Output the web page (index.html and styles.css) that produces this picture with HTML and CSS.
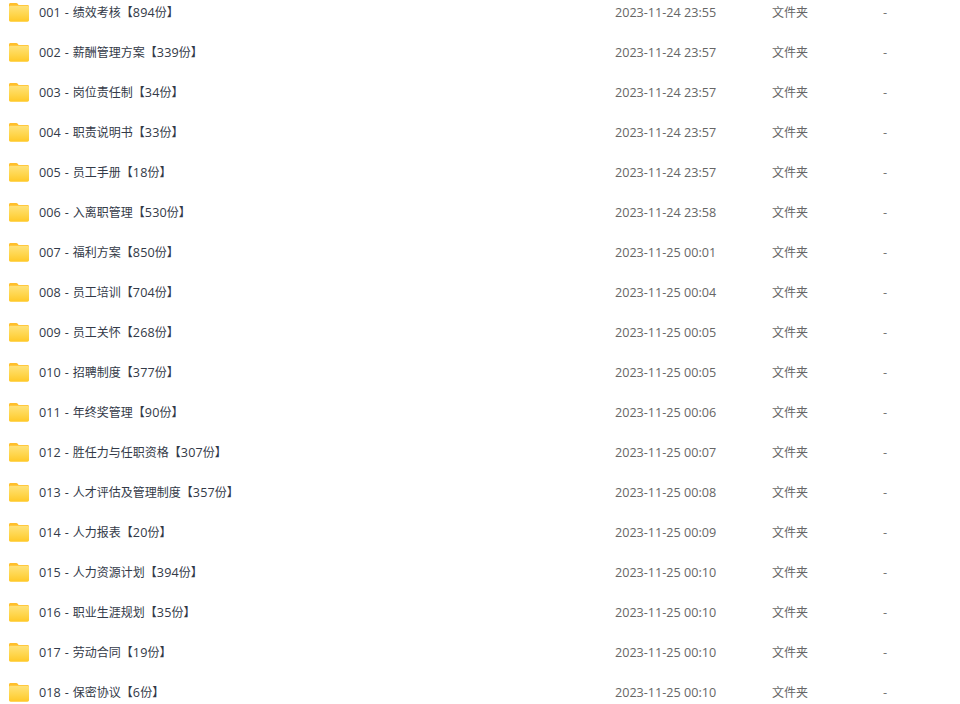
FILE: index.html
```html
<!DOCTYPE html>
<html lang="zh-CN">
<head>
<meta charset="utf-8">
<title>文件列表</title>
<link rel="stylesheet" href="styles.css">
</head>
<body>
<svg class="sprite" width="0" height="0" aria-hidden="true">
  <defs>
    <linearGradient id="fg" x1="0" y1="0" x2="0" y2="1"><stop offset="0" stop-color="#ffe27a"/><stop offset="0.5" stop-color="#ffd750"/><stop offset="1" stop-color="#ffc826"/></linearGradient>
    <symbol id="folder" viewBox="0 0 20 19">
      <path d="M0 1.500C0 .6.600 0 1.500 0h5.700c.7 0 1.100.3 1.500.8l.9 1.100h8.800c1 0 1.600.7 1.600 1.600V8H0Z" fill="#ffbf2b"/>
      <path d="M0 4.200c0-1 .7-1.500 1.600-1.500h16.800c.9 0 1.600.5 1.600 1.500v12.900c0 1-.7 1.700-1.600 1.700H1.600C.7 18.800 0 18.100 0 17.100Z" fill="url(#fg)"/>
    </symbol>
  </defs>
</svg>
<main class="list">
  <div class="row"><svg class="icon"><use href="#folder"/></svg><span class="name"><span class="num">001 - </span>绩效考核【<span class="num">894</span>份】</span><span class="date">2023-11-24 23:55</span><span class="type">文件夹</span><span class="size">-</span></div>
  <div class="row"><svg class="icon"><use href="#folder"/></svg><span class="name"><span class="num">002 - </span>薪酬管理方案【<span class="num">339</span>份】</span><span class="date">2023-11-24 23:57</span><span class="type">文件夹</span><span class="size">-</span></div>
  <div class="row"><svg class="icon"><use href="#folder"/></svg><span class="name"><span class="num">003 - </span>岗位责任制【<span class="num">34</span>份】</span><span class="date">2023-11-24 23:57</span><span class="type">文件夹</span><span class="size">-</span></div>
  <div class="row"><svg class="icon"><use href="#folder"/></svg><span class="name"><span class="num">004 - </span>职责说明书【<span class="num">33</span>份】</span><span class="date">2023-11-24 23:57</span><span class="type">文件夹</span><span class="size">-</span></div>
  <div class="row"><svg class="icon"><use href="#folder"/></svg><span class="name"><span class="num">005 - </span>员工手册【<span class="num">18</span>份】</span><span class="date">2023-11-24 23:57</span><span class="type">文件夹</span><span class="size">-</span></div>
  <div class="row"><svg class="icon"><use href="#folder"/></svg><span class="name"><span class="num">006 - </span>入离职管理【<span class="num">530</span>份】</span><span class="date">2023-11-24 23:58</span><span class="type">文件夹</span><span class="size">-</span></div>
  <div class="row"><svg class="icon"><use href="#folder"/></svg><span class="name"><span class="num">007 - </span>福利方案【<span class="num">850</span>份】</span><span class="date">2023-11-25 00:01</span><span class="type">文件夹</span><span class="size">-</span></div>
  <div class="row"><svg class="icon"><use href="#folder"/></svg><span class="name"><span class="num">008 - </span>员工培训【<span class="num">704</span>份】</span><span class="date">2023-11-25 00:04</span><span class="type">文件夹</span><span class="size">-</span></div>
  <div class="row"><svg class="icon"><use href="#folder"/></svg><span class="name"><span class="num">009 - </span>员工关怀【<span class="num">268</span>份】</span><span class="date">2023-11-25 00:05</span><span class="type">文件夹</span><span class="size">-</span></div>
  <div class="row"><svg class="icon"><use href="#folder"/></svg><span class="name"><span class="num">010 - </span>招聘制度【<span class="num">377</span>份】</span><span class="date">2023-11-25 00:05</span><span class="type">文件夹</span><span class="size">-</span></div>
  <div class="row"><svg class="icon"><use href="#folder"/></svg><span class="name"><span class="num">011 - </span>年终奖管理【<span class="num">90</span>份】</span><span class="date">2023-11-25 00:06</span><span class="type">文件夹</span><span class="size">-</span></div>
  <div class="row"><svg class="icon"><use href="#folder"/></svg><span class="name"><span class="num">012 - </span>胜任力与任职资格【<span class="num">307</span>份】</span><span class="date">2023-11-25 00:07</span><span class="type">文件夹</span><span class="size">-</span></div>
  <div class="row"><svg class="icon"><use href="#folder"/></svg><span class="name"><span class="num">013 - </span>人才评估及管理制度【<span class="num">357</span>份】</span><span class="date">2023-11-25 00:08</span><span class="type">文件夹</span><span class="size">-</span></div>
  <div class="row"><svg class="icon"><use href="#folder"/></svg><span class="name"><span class="num">014 - </span>人力报表【<span class="num">20</span>份】</span><span class="date">2023-11-25 00:09</span><span class="type">文件夹</span><span class="size">-</span></div>
  <div class="row"><svg class="icon"><use href="#folder"/></svg><span class="name"><span class="num">015 - </span>人力资源计划【<span class="num">394</span>份】</span><span class="date">2023-11-25 00:10</span><span class="type">文件夹</span><span class="size">-</span></div>
  <div class="row"><svg class="icon"><use href="#folder"/></svg><span class="name"><span class="num">016 - </span>职业生涯规划【<span class="num">35</span>份】</span><span class="date">2023-11-25 00:10</span><span class="type">文件夹</span><span class="size">-</span></div>
  <div class="row"><svg class="icon"><use href="#folder"/></svg><span class="name"><span class="num">017 - </span>劳动合同【<span class="num">19</span>份】</span><span class="date">2023-11-25 00:10</span><span class="type">文件夹</span><span class="size">-</span></div>
  <div class="row"><svg class="icon"><use href="#folder"/></svg><span class="name"><span class="num">018 - </span>保密协议【<span class="num">6</span>份】</span><span class="date">2023-11-25 00:10</span><span class="type">文件夹</span><span class="size">-</span></div>
</main>
</body>
</html>
```
FILE: styles.css
```css
html, body {
  margin: 0;
  padding: 0;
  height: 704px;
  overflow: hidden;
  background: #fff;
}
.sprite { position: absolute; }
.list {
  margin-top: -7px;
  font-family: "Noto Sans CJK SC", sans-serif;
  font-size: 12px;
}
.row {
  display: flex;
  align-items: center;
  height: 40px;
  padding-left: 9px;
}
.icon {
  width: 20px;
  height: 19px;
  flex: none;
  margin-right: 10px;
  margin-bottom: 1px;
}
.name, .date, .type, .size {
  flex: none;
  line-height: 16px;
}
.name, .date { padding-bottom: 1px; }
.type, .size { padding-bottom: 3px; }
.name {
  width: 576px;
  color: #333a48;
}
.num, .date {
  font-family: "Open Sans", "Noto Sans CJK SC", sans-serif;
  font-size: 12.6px;
}
.num {
  letter-spacing: 0.1px;
  word-spacing: 0.5px;
}
.date {
  width: 157px;
  color: #666;
}
.type {
  width: 111px;
  color: #666;
}
.size { color: #666; }
```
